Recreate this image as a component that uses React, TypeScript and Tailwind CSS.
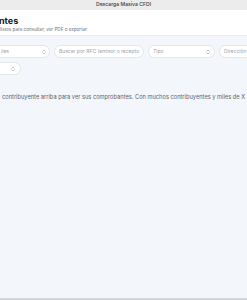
// App.tsx
// ========================================
// Descarga Masiva CFDI – vista de comprobantes (recorte)
// ========================================

const font = { fontFamily: "Inter, 'Noto Sans', sans-serif" };

// Chevron doble de los selects
function Chevrons() {
  return (
    <svg width="4" height="6" viewBox="0 0 8 12" className="shrink-0">
      <path d="M1.5 4.5 L4 2 L6.5 4.5" fill="none" stroke="#9ca3af" strokeWidth="1.3" strokeLinecap="round" strokeLinejoin="round" />
      <path d="M1.5 7.5 L4 10 L6.5 7.5" fill="none" stroke="#9ca3af" strokeWidth="1.3" strokeLinecap="round" strokeLinejoin="round" />
    </svg>
  );
}

export default function App() {
  return (
    <div className="w-[247px] h-[300px] overflow-hidden flex flex-col bg-[#f3f6fa]" style={font}>
      {/* barra de título */}
      <div className="h-[10px] shrink-0 bg-[#ececec] flex items-center justify-center text-[5.1px] font-medium text-[#3a3a3a]">
        Descarga Masiva CFDI
      </div>

      {/* encabezado */}
      <div className="h-[26px] shrink-0 bg-white border-b border-[#e8ebef] flex flex-col pt-[6px]">
        <h1 className="text-[9px] leading-[10px] font-bold text-[#111827] -ml-[1px]">ntes</h1>
        <p className="text-[4.6px] leading-[6px] text-[#6b7280] mt-[1px]">listos para consultar, ver PDF o exportar</p>
      </div>

      {/* filtros */}
      <div className="flex flex-col gap-[4px] pt-[9px] -ml-[12px]">
        <div className="flex gap-[4px]">
          <div className="w-[62px] h-[13px] shrink-0 bg-white border border-[#e3e6ea] rounded-full flex items-center justify-between pl-[12px] pr-[3px] text-[5px] text-[#9ca3af]">
            <span>iles</span>
            <Chevrons />
          </div>
          <div className="w-[90px] h-[13px] shrink-0 bg-white border border-[#e3e6ea] rounded-full flex items-center pl-[4px] text-[5px] text-[#9ca3af] overflow-hidden whitespace-nowrap">
            Buscar por RFC (emisor o recepto
          </div>
          <div className="w-[67px] h-[13px] shrink-0 bg-white border border-[#e3e6ea] rounded-full flex items-center justify-between pl-[4px] pr-[4px] text-[5px] text-[#9ca3af]">
            <span>Tipo</span>
            <Chevrons />
          </div>
          <div className="w-[60px] h-[13px] shrink-0 bg-white border border-[#e3e6ea] rounded-full flex items-center pl-[4px] text-[5px] text-[#9ca3af]">
            Dirección
          </div>
        </div>
        <div className="flex">
          <div className="w-[33px] h-[13px] shrink-0 bg-white border border-[#e3e6ea] rounded-full flex items-center justify-end pr-[5px]">
            <Chevrons />
          </div>
        </div>
      </div>

      {/* mensaje vacío */}
      <p className="mt-[18px] pl-[2px] text-[5.7px] leading-[8px] text-[#5b6470] whitespace-nowrap">
        contribuyente arriba para ver sus comprobantes. Con muchos contribuyentes y miles de X
      </p>

      <div className="flex-1" />
      <div className="h-[2px] shrink-0 bg-[#d4d6d9]" />
    </div>
  );
}
